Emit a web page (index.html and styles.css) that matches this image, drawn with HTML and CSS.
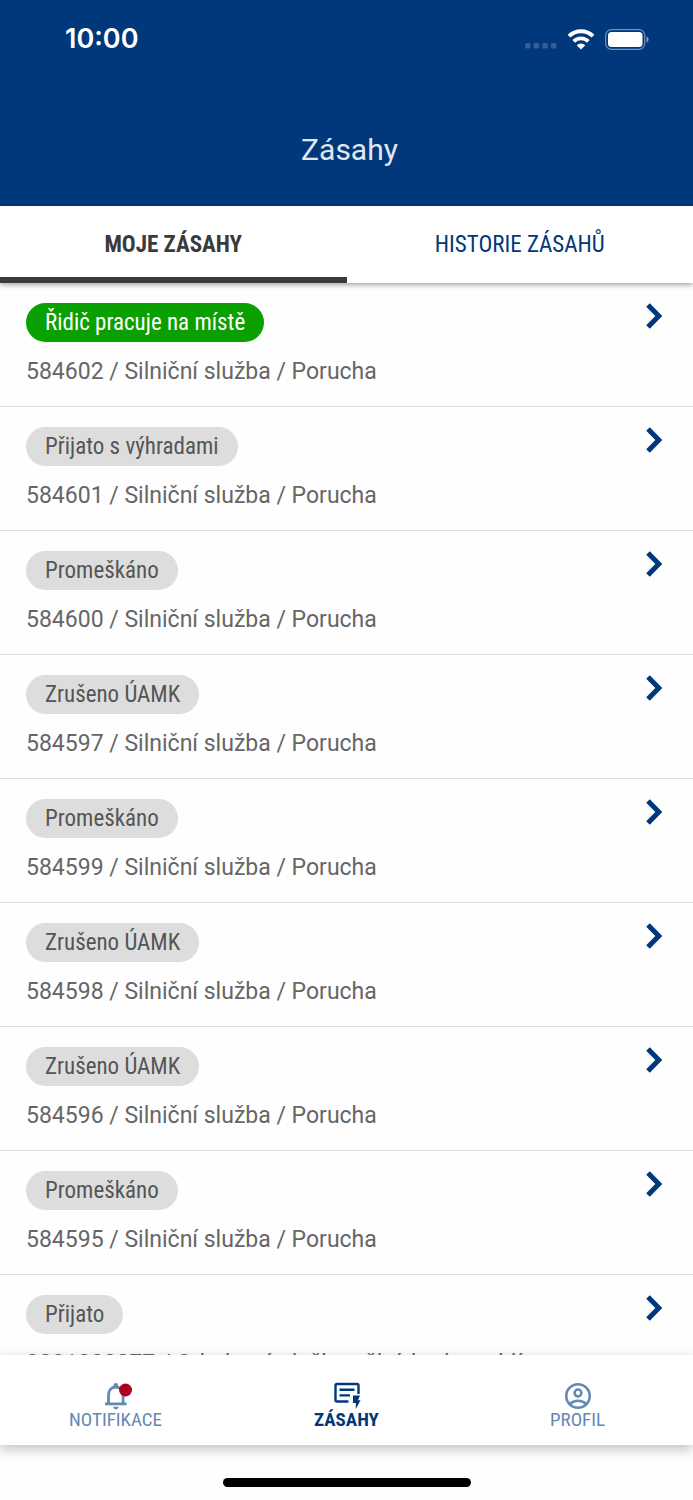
FILE: index.html
```
<!DOCTYPE html>
<html lang="cs">
<head>
    <meta charset="UTF-8">
    <meta name="viewport" content="width=device-width, initial-scale=1.0">
    <title>Zásahy</title>
    <link rel="stylesheet" href="styles.css">
</head>
<body>
    <header class="header">
        <div class="status-bar">
            <span class="time">10:00</span>
            <div class="status-icons">
                <svg class="signal" width="32" height="6" viewBox="0 0 32 6">
                    <rect x="0" width="5.5" height="5.5" rx="1.5"/>
                    <rect x="8.7" width="5.5" height="5.5" rx="1.5"/>
                    <rect x="17.3" width="5.5" height="5.5" rx="1.5"/>
                    <rect x="26" width="5.5" height="5.5" rx="1.5"/>
                </svg>
                <svg class="wifi" width="28" height="21" viewBox="0 0 28 21">
                    <path d="M2 7.2a17 17 0 0 1 24 0" fill="none" stroke="#fff" stroke-width="4"/>
                    <path d="M6.7 12.4a10.4 10.4 0 0 1 14.6 0" fill="none" stroke="#fff" stroke-width="3.800"/>
                    <path d="M14 20.5l-4.3-4.3a6.2 6.2 0 0 1 8.6 0z" fill="#fff"/>
                </svg>
                <svg class="battery" width="44" height="21" viewBox="0 0 44 21">
                    <rect x=".7" y=".7" width="39" height="19.6" rx="5.5" fill="none" stroke="#fff" stroke-opacity=".45" stroke-width="1.2"/>
                    <rect x="3" y="3" width="34.5" height="15" rx="3.5" fill="#fff"/>
                    <path d="M41.5 7.3a3.5 3.5 0 0 1 0 6.4z" fill="#fff" fill-opacity=".5"/>
                </svg>
            </div>
        </div>
        <h1>Zásahy</h1>
    </header>

    <nav class="tabs">
        <a class="tab active" href="#moje">MOJE ZÁSAHY</a>
        <a class="tab" href="#historie">HISTORIE ZÁSAHŮ</a>
    </nav>

    <main class="list">
        <a class="item" href="#584602">
            <span class="item-text"><span class="badge working">Řidič pracuje na místě</span><span class="desc">584602 / Silniční služba / Porucha</span></span>
            <svg class="arrow" viewBox="0 0 16 26"><path d="M2 2l10.8 11L2 24"/></svg>
        </a>
        <a class="item" href="#584601">
            <span class="item-text"><span class="badge">Přijato s výhradami</span><span class="desc">584601 / Silniční služba / Porucha</span></span>
            <svg class="arrow" viewBox="0 0 16 26"><path d="M2 2l10.8 11L2 24"/></svg>
        </a>
        <a class="item" href="#584600">
            <span class="item-text"><span class="badge">Promeškáno</span><span class="desc">584600 / Silniční služba / Porucha</span></span>
            <svg class="arrow" viewBox="0 0 16 26"><path d="M2 2l10.8 11L2 24"/></svg>
        </a>
        <a class="item" href="#584597">
            <span class="item-text"><span class="badge">Zrušeno ÚAMK</span><span class="desc">584597 / Silniční služba / Porucha</span></span>
            <svg class="arrow" viewBox="0 0 16 26"><path d="M2 2l10.8 11L2 24"/></svg>
        </a>
        <a class="item" href="#584599">
            <span class="item-text"><span class="badge">Promeškáno</span><span class="desc">584599 / Silniční služba / Porucha</span></span>
            <svg class="arrow" viewBox="0 0 16 26"><path d="M2 2l10.8 11L2 24"/></svg>
        </a>
        <a class="item" href="#584598">
            <span class="item-text"><span class="badge">Zrušeno ÚAMK</span><span class="desc">584598 / Silniční služba / Porucha</span></span>
            <svg class="arrow" viewBox="0 0 16 26"><path d="M2 2l10.8 11L2 24"/></svg>
        </a>
        <a class="item" href="#584596">
            <span class="item-text"><span class="badge">Zrušeno ÚAMK</span><span class="desc">584596 / Silniční služba / Porucha</span></span>
            <svg class="arrow" viewBox="0 0 16 26"><path d="M2 2l10.8 11L2 24"/></svg>
        </a>
        <a class="item" href="#584595">
            <span class="item-text"><span class="badge">Promeškáno</span><span class="desc">584595 / Silniční služba / Porucha</span></span>
            <svg class="arrow" viewBox="0 0 16 26"><path d="M2 2l10.8 11L2 24"/></svg>
        </a>
        <a class="item" href="#2021000077">
            <span class="item-text"><span class="badge">Přijato</span><span class="desc">2021000077 / Odtahová služba, tělní, bude rychlí</span></span>
            <svg class="arrow" viewBox="0 0 16 26"><path d="M2 2l10.8 11L2 24"/></svg>
        </a>
    </main>

    <nav class="bottom-nav">
        <a class="nav-item" href="#notifikace">
            <svg class="nav-icon" viewBox="0 0 28 28">
                <path d="M6.500 22V13C6.500 8 9.500 5 13.800 5s7.300 3 7.300 8v9" fill="none" stroke="currentColor" stroke-width="2.800"/>
                <path d="M11.500 5V3.200a2.300 2.300 0 0 1 4.600 0V5zM3 20.600h21.500v2.600H3zM11.200 24.800h5.400a2.700 2.400 0 0 1-5.400 0z" fill="currentColor"/>
                <circle cx="23.500" cy="8" r="6.500" fill="#b00020"/>
            </svg>
            <span>NOTIFIKACE</span>
        </a>
        <a class="nav-item active" href="#zasahy">
            <svg class="nav-icon" viewBox="0 0 28 28">
                <path d="M15.500 19.500H4a1.500 1.500 0 0 1-1.500-1.500V3.500A1.500 1.500 0 0 1 4 2h20a1.500 1.500 0 0 1 1.500 1.500v8.500M6.500 7.800h15M6.500 13.400h10.500" fill="none" stroke="currentColor" stroke-width="2.400"/>
                <path d="M20 13.500h7l-2 4.700h2.500L22.800 27v-6H20z" fill="currentColor"/>
            </svg>
            <span>ZÁSAHY</span>
        </a>
        <a class="nav-item" href="#profil">
            <svg class="nav-icon" viewBox="0 0 28 28" fill="none" stroke="currentColor" stroke-width="2.500">
                <circle cx="14" cy="14" r="11.800"/>
                <circle cx="14" cy="11" r="3.400"/>
                <path d="M5.800 22.200c4.500-4.500 11.900-4.500 16.400 0"/>
            </svg>
            <span>PROFIL</span>
        </a>
    </nav>

    <footer class="home-area">
        <div class="home-indicator"></div>
    </footer>
</body>
</html>
```
FILE: styles.css
```
* {
    box-sizing: border-box;
}
body {
    margin: 0;
    height: 100vh;
    display: flex;
    flex-direction: column;
    background: #fefefe;
    font-family: Roboto, sans-serif;
}
a {
    text-decoration: none;
}
.header {
    background: #00387b;
    color: #fff;
    padding-bottom: 36px;
}
.status-bar {
    display: flex;
    justify-content: space-between;
    align-items: center;
    height: 78px;
    padding: 0 44px 0 65px;
}
.time {
    font-family: Inter, sans-serif;
    font-size: 27px;
    font-weight: 600;
    line-height: 32px;
}
.status-icons {
    display: flex;
    align-items: center;
    gap: 10px;
}
.signal {
    fill: #fff;
    fill-opacity: 0.2;
    margin-top: 14px;
}
.header h1 {
    margin: 52px 0 0;
    padding-left: 6px;
    font-size: 30px;
    font-weight: 400;
    line-height: 40px;
    text-align: center;
    color: #e0e7ef;
}
.tabs {
    display: flex;
    position: relative;
    z-index: 1;
    background: #fff;
    box-shadow: 0 2px 5px rgba(0, 0, 0, 0.35);
}
.tab {
    flex: 1;
    height: 77px;
    border-bottom: 6px solid transparent;
    font-family: "Roboto Condensed", Roboto, sans-serif;
    font-size: 23px;
    line-height: 78px;
    text-align: center;
    color: #00387b;
}
.tab.active {
    font-weight: 700;
    color: #3a3a3a;
    border-bottom-color: #3a3a3a;
}
.list {
    flex: 1;
    min-height: 0;
    overflow: hidden;
}
.item {
    display: flex;
    justify-content: space-between;
    align-items: flex-start;
    height: 124px;
    padding: 20px 31px 0 26px;
    border-bottom: 1px solid #dedede;
}
.item-text {
    display: flex;
    flex-direction: column;
    align-items: flex-start;
    gap: 14px;
}
.badge {
    padding: 0 19px;
    border-radius: 20px;
    background: #ddd;
    color: #555;
    font-family: "Roboto Condensed", Roboto, sans-serif;
    font-size: 23px;
    line-height: 39px;
}
.badge.working {
    background: #0aa000;
    color: #fff;
}
.desc {
    font-size: 23px;
    line-height: 32px;
    color: #666;
}
.arrow {
    width: 16px;
    height: 26px;
    overflow: visible;
    fill: none;
    stroke: #00387b;
    stroke-width: 5;
}
.bottom-nav {
    display: flex;
    position: relative;
    z-index: 1;
    height: 90px;
    padding-top: 27px;
    background: #fff;
    box-shadow: 0 4px 12px rgba(0, 0, 0, 0.25);
}
.nav-item {
    flex: 1;
    display: flex;
    flex-direction: column;
    align-items: center;
    font-family: "Roboto Condensed", Roboto, sans-serif;
    font-size: 19px;
    line-height: 20px;
    color: #6488b4;
}
.nav-item.active {
    font-weight: 700;
    color: #00387b;
}
.nav-icon {
    width: 28px;
    height: 28px;
    overflow: visible;
}
.home-area {
    height: 55px;
    padding-top: 33px;
}
.home-indicator {
    width: 248px;
    height: 9px;
    margin: 0 auto;
    border-radius: 5px;
    background: #000;
}
```
